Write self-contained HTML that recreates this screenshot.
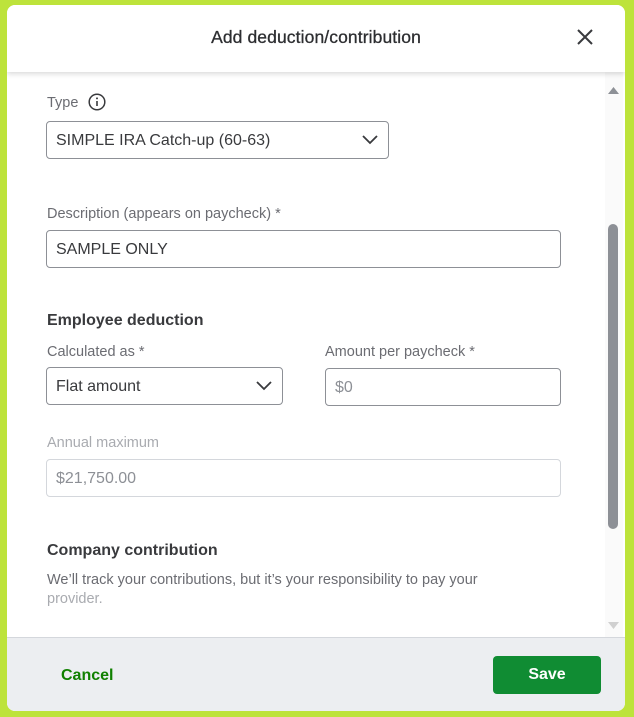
<!DOCTYPE html>
<html><head><style>
*{box-sizing:border-box;margin:0;padding:0}
body{width:634px;height:717px;background:#bde33b;font-family:"Liberation Sans",sans-serif;position:relative;overflow:hidden}
.dlg{position:absolute;left:7px;top:5px;width:618px;height:706px;background:#fff;border-radius:8px;overflow:hidden}
.hdr{position:absolute;left:0;top:0;width:100%;height:67px;background:#fff;box-shadow:0 2px 5px rgba(0,0,0,.15);z-index:2}
.hdr h1{position:absolute;left:0;right:0;top:22px;text-align:center;font-size:17.5px;font-weight:normal;color:#2d2e31;letter-spacing:.1px;-webkit-text-stroke:.3px #2d2e31}
.x{position:absolute;left:568px;top:22px}
.lbl{position:absolute;font-size:14.5px;color:#6b6c72}
.box{position:absolute;border:1px solid #8d9096;border-radius:4px;height:38px;font-size:16px;color:#393a3d;padding:0 9px;line-height:38px}
.h2{position:absolute;font-size:16px;font-weight:bold;color:#393a3d}
.chev{position:absolute;right:10px;top:13px}
.foot{position:absolute;left:0;top:632px;width:100%;height:74px;background:#eceef1;border-top:1px solid #d4d7dc}
.sb{position:absolute;left:598px;top:67px;width:18px;height:565px;background:#fafafa}
</style></head><body>
<div class="dlg">
<div class="hdr"><h1>Add deduction/contribution</h1>
<svg class="x" width="20" height="20" viewBox="0 0 20 20"><path d="M3 3L17 17M17 3L3 17" stroke="#393a3d" stroke-width="2"/></svg></div>
<div class="sb"><svg style="position:absolute;left:3px;top:14px" width="11" height="8"><path d="M0 8L5.5 1L11 8Z" fill="#8d9096"/></svg>
<div style="position:absolute;left:3px;top:152px;width:10px;height:305px;background:#8d9096;border-radius:5px"></div>
<svg style="position:absolute;left:3px;top:550px" width="11" height="8"><path d="M0 0L5.5 7L11 0Z" fill="#d0d0d0"/></svg></div>
<div class="lbl" style="left:40px;top:90px">Type</div>
<svg style="position:absolute;left:81px;top:88px" width="18" height="18" viewBox="0 0 18 18"><circle cx="9" cy="9" r="7.8" fill="none" stroke="#393a3d" stroke-width="1.5"/><circle cx="9" cy="5.4" r="1" fill="#393a3d"/><path d="M9 8v5" stroke="#393a3d" stroke-width="1.6"/></svg>
<div class="box" style="left:39px;top:116px;width:343px">SIMPLE IRA Catch-up (60-63)<svg class="chev" width="16" height="10"><path d="M1 1L8 8L15 1" fill="none" stroke="#393a3d" stroke-width="1.8"/></svg></div>
<div class="lbl" style="left:40px;top:201px">Description (appears on paycheck) *</div>
<div class="box" style="left:39px;top:225px;width:515px">SAMPLE ONLY</div>
<div class="h2" style="left:40px;top:307px">Employee deduction</div>
<div class="lbl" style="left:40px;top:339px">Calculated as *</div>
<div class="box" style="left:39px;top:362px;width:237px">Flat amount<svg class="chev" width="16" height="10"><path d="M1 1L8 8L15 1" fill="none" stroke="#393a3d" stroke-width="1.8"/></svg></div>
<div class="lbl" style="left:318px;top:339px">Amount per paycheck *</div>
<div class="box" style="left:318px;top:363px;width:236px;color:#8d9096">$0</div>
<div class="lbl" style="left:40px;top:430px;color:#a9abb0">Annual maximum</div>
<div class="box" style="left:39px;top:454px;width:515px;border-color:#d4d7dc;color:#8d9096">$21,750.00</div>
<div class="h2" style="left:40px;top:537px">Company contribution</div>
<div style="position:absolute;left:40px;top:566px;width:470px;font-size:14.5px;line-height:19px;color:#6b6c72">We’ll track your contributions, but it’s your responsibility to pay your <span style="color:#a9abb0">provider.</span></div>
<div class="foot">
<div style="position:absolute;left:54px;top:29px;font-size:16px;font-weight:bold;color:#108000">Cancel</div>
<div style="position:absolute;left:486px;top:18px;width:108px;height:38px;background:#108c33;border-radius:4px;color:#fff;font-weight:bold;font-size:16px;text-align:center;line-height:38px">Save</div>
</div>
</div>
</body></html>
